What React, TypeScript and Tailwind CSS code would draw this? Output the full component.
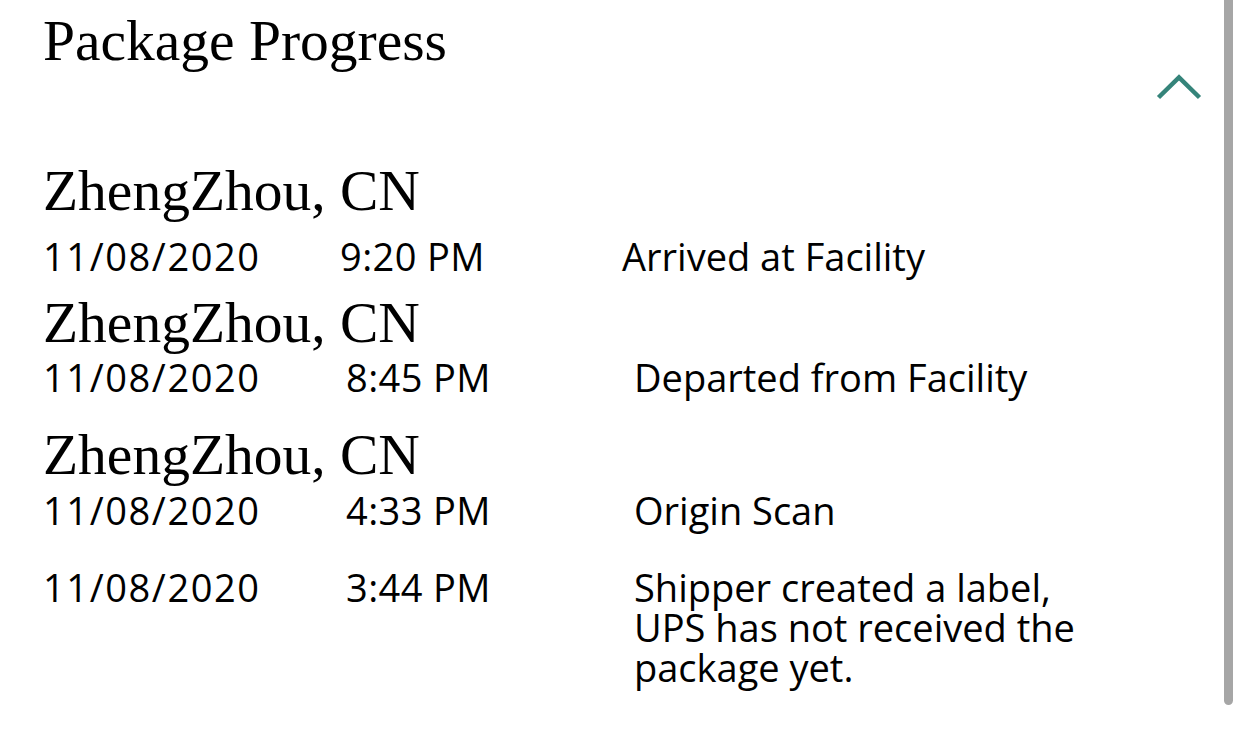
const events = [
  {
    location: "ZhengZhou, CN",
    date: "11/08/2020",
    time: "9:20 PM",
    desc: ["Arrived at Facility"],
    locGap: "mt-[62px]",
    rowGap: "mt-[17px]",
    cols: "grid-cols-[297px_282px_1fr]",
  },
  {
    location: "ZhengZhou, CN",
    date: "11/08/2020",
    time: "8:45 PM",
    desc: ["Departed from Facility"],
    locGap: "mt-[18px]",
    rowGap: "mt-[6px]",
    cols: "grid-cols-[303px_288px_1fr]",
  },
  {
    location: "ZhengZhou, CN",
    date: "11/08/2020",
    time: "4:33 PM",
    desc: ["Origin Scan"],
    locGap: "mt-[29px]",
    rowGap: "mt-[7px]",
    cols: "grid-cols-[303px_288px_1fr]",
  },
];

const serif = "font-['Liberation_Serif',serif]";
const sans = "font-['Open_Sans',sans-serif]";

export default function App() {
  return (
    <div className="relative h-[729px] w-full overflow-hidden bg-white text-black">
      {/* Header */}
      <div className="flex items-start justify-between pl-[43px] pr-[40px] pt-[12px]">
        <h1 className={`${serif} text-[57.5px] leading-[57px]`}>Package Progress</h1>
        <svg className="mt-[62px]" width="46" height="26" viewBox="0 0 46 26" fill="none">
          <polyline points="2.5,23.5 23,3.5 43.5,23.5" stroke="#35847a" strokeWidth="4.5" />
        </svg>
      </div>

      {/* Activity */}
      <div className="px-[43px]">
        {events.map((e, i) => (
          <div key={i}>
            <div className={`${e.locGap} ${serif} text-[57.5px] leading-[57px]`}>{e.location}</div>
            <div className={`${e.rowGap} grid ${e.cols} ${sans} text-[38px] leading-[40px]`}>
              <span className="tracking-[1.6px]">{e.date}</span>
              <span className="tracking-[0.4px]">{e.time}</span>
              <span>{e.desc.join(" ")}</span>
            </div>
          </div>
        ))}
        <div className={`mt-[37px] grid grid-cols-[303px_288px_1fr] ${sans} text-[38px] leading-[40px]`}>
          <span className="tracking-[1.6px]">11/08/2020</span>
          <span className="tracking-[0.4px]">3:44 PM</span>
          <span>
            Shipper created a label,
            <br />
            UPS has not received the
            <br />
            package yet.
          </span>
        </div>
      </div>

      {/* Scrollbar */}
      <div className="absolute right-[9px] top-0 h-[705px] w-[9px] rounded-b-full bg-[#a6a6a6]" />
    </div>
  );
}
